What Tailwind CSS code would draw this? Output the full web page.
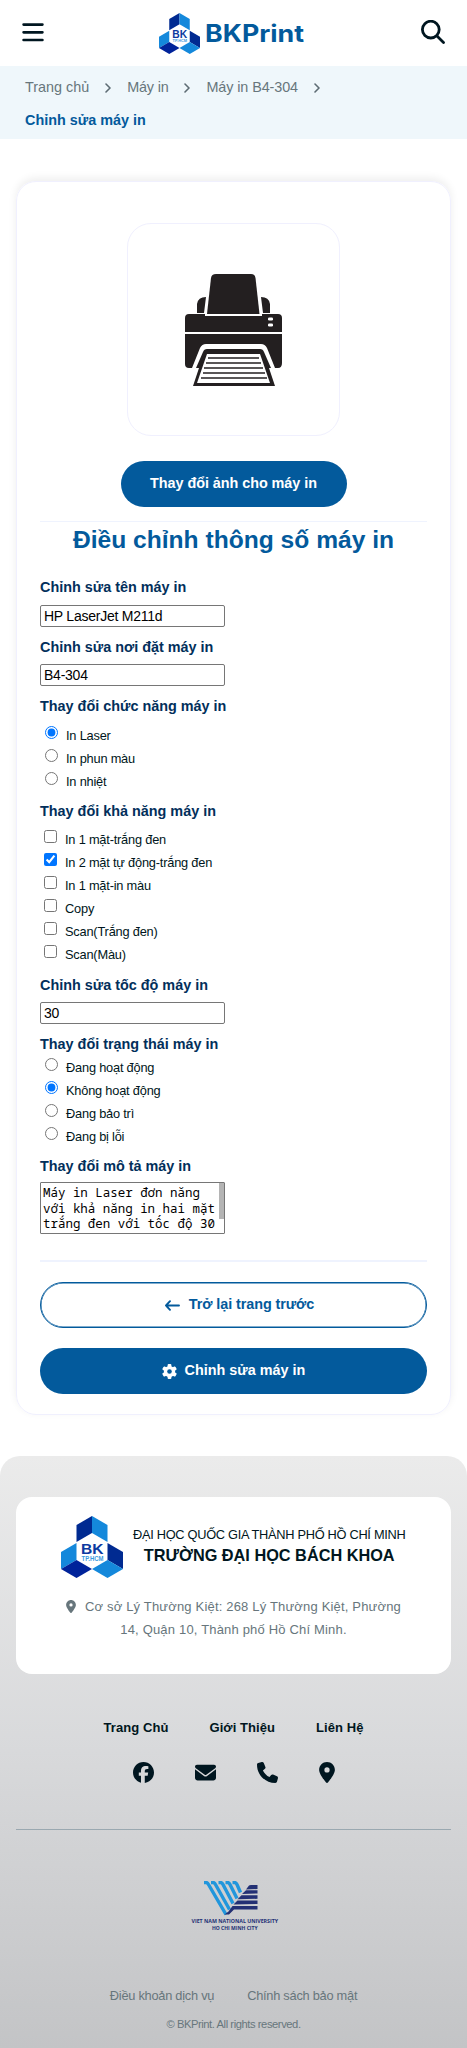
<!DOCTYPE html>
<html lang="vi">
<head>
<meta charset="utf-8">
<title>BKPrint</title>
<script src="https://cdn.jsdelivr.net/npm/@tailwindcss/browser@4"></script>
</head>
<body class="bg-white font-['Liberation_Sans',Arial,sans-serif] text-[14.4px] text-[#001620]">
<svg class="hidden">
  <symbol id="bk" viewBox="0 0 62 62">
    <path d="M31 0 15.500 9v17L31 17z" fill="#002a91"/><path d="M31 0 46.500 9v17L31 17z" fill="#1488db"/>
    <path d="M0 36 15.500 27v17L0 53z" fill="#1488db"/><path d="M0 53 15.500 44 31 53 15.500 62z" fill="#00239a"/>
    <path d="M62 36 46.500 27v17L62 53z" fill="#002a91"/><path d="M62 53 46.500 44 31 53 46.500 62z" fill="#1488db"/>
    <text x="20" y="38" font-family="Liberation Sans" font-weight="700" font-size="15.500" textLength="22.500" lengthAdjust="spacingAndGlyphs" fill="#0b3aa0">BK</text>
    <text x="20.500" y="44.500" font-family="Liberation Sans" font-weight="700" font-size="6.500" textLength="22" lengthAdjust="spacingAndGlyphs" fill="#3b9be0">TP.HCM</text>
  </symbol>
  <symbol id="chev" viewBox="0 0 6 10"><path d="M1 1l4 4-4 4" fill="none" stroke="#5d6b73" stroke-width="1.600" stroke-linecap="round" stroke-linejoin="round"/></symbol>
  <symbol id="pin" viewBox="0 0 384 512"><path d="M215.700 499.200C267 435 384 279.400 384 192 384 86 298 0 192 0S0 86 0 192c0 87.400 117 243 168.300 307.200 12.300 15.300 35.100 15.300 47.400 0zM192 128a64 64 0 1 1 0 128 64 64 0 1 1 0-128z"/></symbol>
</svg>

<header class="flex h-[66px] items-center justify-between pt-px pl-[22px] pr-[22px]">
  <svg class="mb-[3px] h-[19px] w-[22px]" viewBox="0 0 22 19" stroke="#001620" stroke-width="2.700" stroke-linecap="round"><path d="M1.600 1.600h18.800M1.600 9.300h18.800M1.600 17h18.800"/></svg>
  <div class="mr-[3px] flex items-center gap-[5px]">
    <svg class="h-[41px] w-[41px]"><use href="#bk"/></svg>
    <svg class="h-[30px] w-[99px]" viewBox="0 0 99 30"><text x="0" y="23" font-family="Inter" font-weight="700" font-size="24" textLength="99" lengthAdjust="spacingAndGlyphs" fill="#035a9c">BKPrint</text></svg>
  </div>
  <svg class="mb-[3px] h-6 w-6" viewBox="0 0 24 24" fill="none" stroke="#001620" stroke-width="2.800" stroke-linecap="round"><circle cx="9.800" cy="9.600" r="8.400"/><path d="M16 16l6.500 6.400"/></svg>
</header>

<nav class="flex h-[73px] flex-wrap content-start items-center bg-[#eff7fb] pt-[5px] pl-[25px] leading-[33px] text-[#67767c]">
  <a>Trang chủ</a><svg class="mx-4 h-[10px] w-[6px]"><use href="#chev"/></svg>
  <a class="tracking-[-0.200px]">Máy in</a><svg class="mx-4 h-[10px] w-[6px]"><use href="#chev"/></svg>
  <a class="tracking-[-0.100px]">Máy in B4-304</a><svg class="mx-4 h-[10px] w-[6px]"><use href="#chev"/></svg>
  <a class="w-full font-bold text-[#035a9c]">Chỉnh sửa máy in</a>
</nav>

<main class="mx-4 mt-[42px] h-[1234px] rounded-[20px] border border-[#f0f0fe] px-[23px] pt-[41px] shadow-[0_-3px_8px_rgba(0,0,0,0.07)]">
  <div class="mx-auto flex h-[213px] w-[213px] items-center justify-center rounded-[24px] border border-[#f0f0fe]">
    <svg class="h-[113px] w-[98px]" viewBox="0 0 98 113" fill="#231f20">
      <path d="M31 1h35q4 0 4.500 4l4 36H22l4-36q.5-4 5-4z"/>
      <path d="M21 24l-2 16h-7V31q1-7 9-7zM76 24q8 0 9 7v9h-7z"/>
      <path d="M4 41h16v2h57v-2h16q4 0 4 4v14H0V45q0-4 4-4z"/>
      <path d="M0 61h97v29q0 5-4 5h-3l-8-20q-2-4-6-4H21q-4 0-6 4L7 95H4q-4 0-4-4z"/>
      <path d="M11 95l7-16q1-3 4-3h53q3 0 4 3l7 16h-2l6 18H8l6-18z"/>
      <path d="M22 81h53l10 29H12z" fill="#fff"/>
      <path d="M23 85h51M21 90h55M19 95h59M18 100h62M16 105h66" stroke="#231f20" stroke-width="1.700"/>
      <rect x="83" y="44.500" width="5" height="3" rx="1.300" fill="#fff"/><rect x="83" y="50.500" width="5" height="3" rx="1.300" fill="#fff"/>
    </svg>
  </div>
  <button class="mx-auto mt-[25px] block h-[46px] w-[226px] rounded-full bg-[#035a9c] font-bold tracking-[-0.050px] text-white">Thay đổi ảnh cho máy in</button>
  <div class="mt-[14px] h-[1px] bg-[#eff3fe]"></div>
  <h1 class="h-[57px] pt-px text-center text-[24.600px] font-bold leading-[34px] text-[#035a9c]">Điều chỉnh thông số máy in</h1>

  <div class="text-[#022f5b]">
    <div class="h-[59px]"><h2 class="h-[26px] font-bold leading-[16px]">Chỉnh sửa tên máy in</h2>
      <div class="flex h-[22px] w-[185px] items-center rounded-[2px] border border-[#767676] pl-[3px] text-[14px] tracking-[-0.240px] text-black">HP LaserJet M211d</div></div>
    <div class="h-[60px]"><h2 class="h-[26px] font-bold leading-[18px]">Chỉnh sửa nơi đặt máy in</h2>
      <div class="flex h-[22px] w-[185px] items-center rounded-[2px] border border-[#767676] pl-[3px] text-[14px] tracking-[-0.240px] text-black">B4-304</div></div>
    <div class="h-[105px]"><h2 class="h-[25px] font-bold leading-[16px]">Thay đổi chức năng máy in</h2>
      <div class="text-[12.800px] leading-[23px] tracking-[-0.200px] text-[#001620]">
        <label class="flex h-[23px] pl-[5px]"><input type="radio" name="fn" checked class="mt-[3px] mr-2 h-[13px] w-[13px]"><span class="pt-px">In Laser</span></label>
        <label class="flex h-[23px] pl-[5px]"><input type="radio" name="fn" class="mt-[3px] mr-2 h-[13px] w-[13px]"><span class="pt-px">In phun màu</span></label>
        <label class="flex h-[23px] pl-[5px]"><input type="radio" name="fn" class="mt-[3px] mr-2 h-[13px] w-[13px]"><span class="pt-px">In nhiệt</span></label>
      </div></div>
    <div class="h-[173px]"><h2 class="h-[24px] font-bold leading-[16px]">Thay đổi khả năng máy in</h2>
      <div class="text-[12.800px] leading-[23px] tracking-[-0.200px] text-[#001620]">
        <label class="flex h-[23px] pl-[4px]"><input type="checkbox" class="mt-[3px] mr-2 h-[13px] w-[13px]"><span class="pt-px">In 1 mặt-trắng đen</span></label>
        <label class="flex h-[23px] pl-[4px]"><input type="checkbox" checked class="mt-[3px] mr-2 h-[13px] w-[13px]"><span class="pt-px">In 2 mặt tự động-trắng đen</span></label>
        <label class="flex h-[23px] pl-[4px]"><input type="checkbox" class="mt-[3px] mr-2 h-[13px] w-[13px]"><span class="pt-px">In 1 mặt-in màu</span></label>
        <label class="flex h-[23px] pl-[4px]"><input type="checkbox" class="mt-[3px] mr-2 h-[13px] w-[13px]"><span class="pt-px">Copy</span></label>
        <label class="flex h-[23px] pl-[4px]"><input type="checkbox" class="mt-[3px] mr-2 h-[13px] w-[13px]"><span class="pt-px">Scan(Trắng đen)</span></label>
        <label class="flex h-[23px] pl-[4px]"><input type="checkbox" class="mt-[3px] mr-2 h-[13px] w-[13px]"><span class="pt-px">Scan(Màu)</span></label>
      </div></div>
    <div class="h-[60px]"><h2 class="h-[26px] font-bold leading-[18px]">Chỉnh sửa tốc độ máy in</h2>
      <div class="flex h-[22px] w-[185px] items-center rounded-[2px] border border-[#767676] pl-[3px] text-[14px] tracking-[-0.240px] text-black">30</div></div>
    <div class="h-[122px]"><h2 class="h-[19px] font-bold leading-[16px]">Thay đổi trạng thái máy in</h2>
      <div class="text-[12.800px] leading-[23px] tracking-[-0.200px] text-[#001620]">
        <label class="flex h-[23px] pl-[5px]"><input type="radio" name="st" class="mt-[3px] mr-2 h-[13px] w-[13px]"><span class="pt-px">Đang hoạt động</span></label>
        <label class="flex h-[23px] pl-[5px]"><input type="radio" name="st" checked class="mt-[3px] mr-2 h-[13px] w-[13px]"><span class="pt-px">Không hoạt động</span></label>
        <label class="flex h-[23px] pl-[5px]"><input type="radio" name="st" class="mt-[3px] mr-2 h-[13px] w-[13px]"><span class="pt-px">Đang bảo trì</span></label>
        <label class="flex h-[23px] pl-[5px]"><input type="radio" name="st" class="mt-[3px] mr-2 h-[13px] w-[13px]"><span class="pt-px">Đang bị lỗi</span></label>
      </div></div>
    <h2 class="h-[24px] font-bold leading-[16px]">Thay đổi mô tả máy in</h2>
    <div class="flex h-[52px] w-[185px] justify-between overflow-hidden rounded-[1px] border border-[#767676] pl-[2px] pt-[2px] font-['Noto_Sans_Mono','DejaVu_Sans_Mono',monospace] text-[12.460px] leading-[15.600px] text-black">
      <div class="whitespace-nowrap">Máy in Laser đơn năng<br>với khả năng in hai mặt<br>trắng đen với tốc độ 30</div>
      <div class="-mt-[2px] h-[36px] w-[5px] shrink-0 bg-[#b4b4b4]"></div>
    </div>
  </div>

  <div class="mt-[26px] h-[2px] bg-[#eff3fe]"></div>
  <button class="mt-5 flex h-[46px] w-full items-center justify-center gap-[9px] rounded-full border border-[#035a9c] pl-3 font-bold tracking-[-0.080px] text-[#035a9c] shadow-[inset_0_0_0_0.5px_#035a9c]">
    <svg class="h-[11px] w-[15px]" viewBox="0 0 15 11" fill="none" stroke="#035a9c" stroke-width="1.900" stroke-linecap="round" stroke-linejoin="round"><path d="M14 5.500H1M5 1.200L1 5.500l4 4.300"/></svg>Trở lại trang trước
  </button>
  <button class="mt-5 flex h-[46px] w-full items-center justify-center gap-2 rounded-full bg-[#035a9c] font-bold text-white">
    <svg class="h-[15px] w-[15px]" viewBox="0 0 15 15"><g fill="#fff"><circle cx="7.500" cy="7.500" r="5.600"/><g id="t"><rect x="5.600" y="0" width="3.800" height="15" rx="1"/></g><use href="#t" transform="rotate(60 7.500 7.500)"/><use href="#t" transform="rotate(120 7.500 7.500)"/></g><circle cx="7.500" cy="7.500" r="2.300" fill="#035a9c"/></svg>Chỉnh sửa máy in
  </button>
</main>

<footer class="mt-[41px] h-[592px] rounded-t-[20px] bg-linear-to-b from-[#ebebeb] via-[#d8d9db] to-[#c3c4c6] px-4 pt-[41px]">
  <div class="h-[177px] rounded-[16px] bg-white pt-[19px]">
    <div class="flex items-center gap-[10px] pl-[45px]">
      <svg class="h-[62px] w-[62px]"><use href="#bk"/></svg>
      <div class="-mt-[2px] text-center whitespace-nowrap">
        <div class="text-[12.800px] leading-[18px] tracking-[-0.290px]">ĐẠI HỌC QUỐC GIA THÀNH PHỐ HỒ CHÍ MINH</div>
        <div class="text-[16.300px] font-bold leading-[22px]">TRƯỜNG ĐẠI HỌC BÁCH KHOA</div>
      </div>
    </div>
    <p class="mt-[17px] text-center text-[13px] leading-[23px] tracking-[0.180px] text-[#67767c]"><svg class="mr-[9px] inline-block h-[13px] w-[10px] align-[-2px]" fill="#67767c"><use href="#pin"/></svg>Cơ sở Lý Thường Kiệt: 268 Lý Thường Kiệt, Phường<br>14, Quận 10, Thành phố Hồ Chí Minh.</p>
  </div>
  <div class="mt-[44px] flex justify-center gap-[41px] text-[13px] font-bold leading-5 tracking-[0.070px]"><a>Trang Chủ</a><a>Giới Thiệu</a><a>Liên Hệ</a></div>
  <div class="mt-[24px] flex h-[21px] items-center justify-center gap-[41px]">
    <svg class="h-[21px] w-[21px]" viewBox="0 0 512 512" fill="#001620"><path d="M512 256C512 114.600 397.400 0 256 0S0 114.600 0 256c0 120 82.700 220.800 194.200 248.500V334.200h-52.800V256h52.800v-33.700c0-87.100 39.400-127.500 125-127.500 16.200 0 44.200 3.200 55.700 6.400V172c-6-.6-16.500-1-29.600-1-42 0-58.200 15.900-58.200 57.200V256h83.600l-14.400 78.200h-69.300v175.900C413.800 494.800 512 386.900 512 256z"/></svg>
    <svg class="h-[21px] w-[21px]" viewBox="0 0 512 512" fill="#001620"><path d="M48 64C21.500 64 0 85.500 0 112c0 15.100 7.100 29.300 19.200 38.400l217.600 163.200c11.400 8.500 27 8.500 38.400 0l217.600-163.200C504.900 141.300 512 127.100 512 112c0-26.500-21.500-48-48-48zM0 176v208c0 35.300 28.700 64 64 64h384c35.300 0 64-28.700 64-64V176L294.400 339.200c-22.800 17.100-54 17.100-76.800 0z"/></svg>
    <svg class="h-[21px] w-[21px]" viewBox="0 0 512 512" fill="#001620"><path d="M164.900 24.600c-7.700-18.600-28-28.500-47.400-23.200l-88 24C12.100 30.200 0 46 0 64c0 247.400 200.600 448 448 448 18 0 33.800-12.100 38.600-29.500l24-88c5.300-19.400-4.600-39.700-23.200-47.400l-96-40c-16.300-6.800-35.200-2.100-46.300 11.600L304.700 368C234.300 334.700 177.300 277.700 144 207.300l49.300-40.300c13.700-11.200 18.400-30 11.600-46.300z"/></svg>
    <svg class="h-[21px] w-[16px]" fill="#001620"><use href="#pin"/></svg>
  </div>
  <div class="mt-[46px] h-[1px] bg-[#9aa8b0]"></div>
  <svg class="mx-auto mt-[51px] block h-[52px] w-[90px] translate-x-px" viewBox="0 0 90 52">
    <g stroke="#2196dc" stroke-width="3.400" fill="none"><path d="M14 1.500h2q1.500 0 2.500 2l17.500 30"/><path d="M21 1.500h2q1.500 0 2.500 2l14 25"/><path d="M28.500 1.500h2q1.500 0 2.500 2l10 19"/><path d="M35.500 1.500h2q1.500 0 2.500 2l7 14"/><path d="M42.500 1.500h2q1.500 0 2.500 2l3.500 8"/></g>
    <g fill="#233074"><path d="M56 8.500l3-4q.5-.5 2-.5h6.500v4z"/><path d="M52 13l4-3.800h11.500v3.300z"/><path d="M47.500 18.300l4-4h16v3.500z"/><path d="M43.500 23.500l4-4h20v3.500z"/><path d="M34.500 33.500l4-3 4-5.500h25v3.500H44l-5 5z"/></g>
    <g font-family="Open Sans" font-weight="700" font-size="4.800" fill="#233074"><text x="1.500" y="42" textLength="86.500" lengthAdjust="spacingAndGlyphs">VIET NAM NATIONAL UNIVERSITY</text><text x="22" y="49" textLength="45.500" lengthAdjust="spacingAndGlyphs">HO CHI MINH CITY</text></g>
  </svg>
  <div class="mt-[53px] flex justify-center gap-[33px] text-[12.800px] leading-5 tracking-[-0.250px] text-[#67767c]"><a>Điều khoản dịch vụ</a><a>Chính sách bảo mật</a></div>
  <p class="mt-[8px] text-center text-[11.200px] leading-5 tracking-[-0.430px] text-[#67767c]">© BKPrint. All rights reserved.</p>
</footer>
</body>
</html>
